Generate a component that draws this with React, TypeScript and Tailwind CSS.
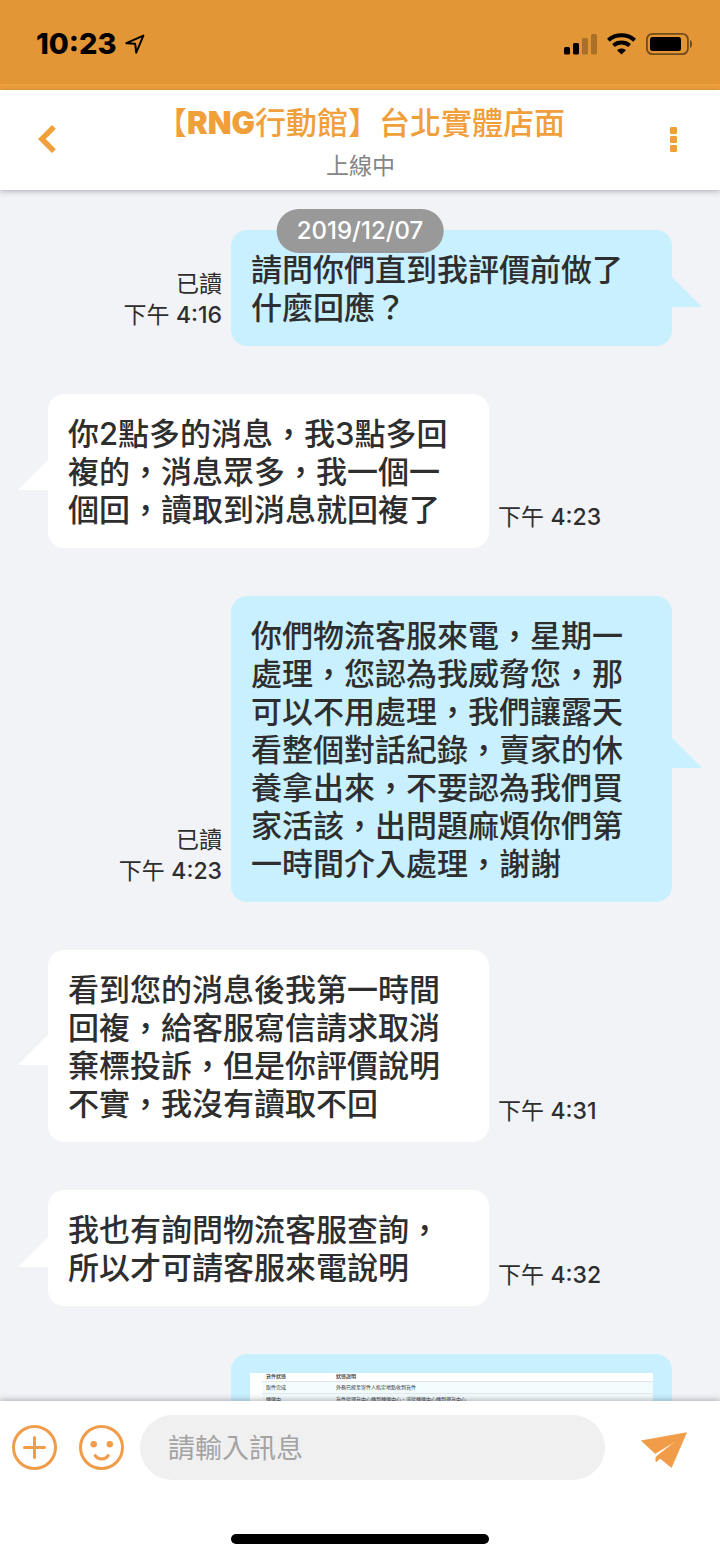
import type { ReactNode } from "react";

type Message = {
  id: number;
  mine: boolean;
  time: string;
  text: string;
};

const messages: Message[] = [
  { id: 1, mine: true, time: "4:16", text: "請問你們直到我評價前做了什麼回應？" },
  {
    id: 2,
    mine: false,
    time: "4:23",
    text: "你2點多的消息，我3點多回複的，消息眾多，我一個一個回，讀取到消息就回複了",
  },
  {
    id: 3,
    mine: true,
    time: "4:23",
    text: "你們物流客服來電，星期一處理，您認為我威脅您，那可以不用處理，我們讓露天看整個對話紀錄，賣家的休養拿出來，不要認為我們買家活該，出問題麻煩你們第一時間介入處理，謝謝",
  },
  {
    id: 4,
    mine: false,
    time: "4:31",
    text: "看到您的消息後我第一時間回複，給客服寫信請求取消棄標投訴，但是你評價說明不實，我沒有讀取不回",
  },
  { id: 5, mine: false, time: "4:32", text: "我也有詢問物流客服查詢，所以才可請客服來電說明" },
];

const parcelStates = [
  ["取件完成", "外務已經至寄件人指定地點收到貨件"],
  ["轉運中", "貨件從理貨中心轉到轉運中心，或從轉運中心轉到理貨中心"],
];

function StatusBar() {
  return (
    <div className="flex h-[90px] shrink-0 items-center justify-between border-b-[6px] border-[#f0a03a] bg-[#e39636] pt-1 pr-[27px] pl-9 text-black">
      <div className="flex items-center gap-2">
        <span className="text-[29px] leading-8 font-extrabold">10:23</span>
        <svg width="20" height="20" viewBox="0 0 20 20" fill="none" stroke="currentColor" strokeWidth="2" strokeLinejoin="round" aria-hidden="true">
          <path d="M1.4 9.2 18.4 1.6 11.2 18.6 10.2 9.8Z" />
        </svg>
      </div>
      <div className="flex items-center gap-[10px]">
        <svg width="33" height="22" viewBox="0 0 33 22" fill="currentColor" aria-hidden="true">
          <rect x="0" y="14" width="6" height="7.5" rx="1.5" />
          <rect x="9" y="10" width="6" height="11.5" rx="1.5" />
          <rect x="18" y="5" width="6" height="16.5" rx="1.5" opacity=".25" />
          <rect x="27" y="1" width="6" height="20.5" rx="1.5" opacity=".25" />
        </svg>
        <svg width="29" height="22" viewBox="0 0 29 22" aria-hidden="true">
          <g fill="none" stroke="currentColor" strokeWidth="4">
            <path d="M1.4 7.2C8.6.6 20.4.6 27.6 7.2" />
            <path d="M6.4 12.6c4.6-4 11.6-4 16.2 0" />
          </g>
          <path d="M14.5 21.6 10 17.2c2.6-2.2 6.4-2.2 9 0Z" fill="currentColor" />
        </svg>
        <svg width="47" height="22" viewBox="0 0 47 22" aria-hidden="true">
          <rect x=".9" y=".9" width="41" height="20.2" rx="5.5" fill="none" stroke="currentColor" strokeWidth="1.8" opacity=".5" />
          <rect x="4" y="4" width="31" height="14" rx="2.5" fill="currentColor" />
          <path d="M44 7c2.8 1 2.8 7 0 8Z" fill="currentColor" opacity=".5" />
        </svg>
      </div>
    </div>
  );
}

function Header() {
  return (
    <header className="z-10 flex h-[100px] shrink-0 items-center justify-between bg-white pr-[22px] pb-[2px] pl-[23px] shadow-[0_1px_6px_rgba(60,60,80,0.4)]">
      <button type="button" aria-label="返回" className="flex size-12 items-center justify-center text-[#f0a03a]">
        <svg width="18" height="28" viewBox="0 0 18 28" fill="currentColor" aria-hidden="true">
          <path d="M0 14 14 0l3.8 3.8L7.8 14l10 10.2L14 28Z" />
        </svg>
      </button>
      <div className="flex flex-col items-center pt-[6px]">
        <h1 className="text-[31px] leading-10 font-medium whitespace-nowrap text-[#f0a03a]">
          【<span className="font-black">RNG</span>行動館】台北實體店面
        </h1>
        <p className="pt-[7px] text-[23px] leading-8 text-[#858585]">上線中</p>
      </div>
      <button type="button" aria-label="更多選項" className="flex size-12 items-center justify-center text-[#f0a03a]">
        <svg width="7" height="25" viewBox="0 0 7 25" fill="currentColor" aria-hidden="true">
          <rect width="7" height="7" rx="1.2" />
          <rect y="9" width="7" height="7" rx="1.2" />
          <rect y="18" width="7" height="7" rx="1.2" />
        </svg>
      </button>
    </header>
  );
}

function Tail({ mine }: { mine: boolean }) {
  return mine ? (
    <div className="mt-2 size-[30px] shrink-0 self-center bg-[#c8f0fe] [clip-path:polygon(0_0,100%_100%,0_100%)]" />
  ) : (
    <div className="mt-2 size-[30px] shrink-0 self-center bg-white [clip-path:polygon(100%_0,100%_100%,0_100%)]" />
  );
}

function Row({ mine, time, children }: { mine: boolean; time?: string; children: ReactNode }) {
  return (
    <li className={mine ? "flex flex-row-reverse items-end" : "flex items-end"}>
      <Tail mine={mine} />
      <div
        className={
          mine
            ? "max-w-[441px] rounded-2xl bg-[#c8f0fe] px-5 pt-[21px] pb-[19px]"
            : "max-w-[441px] rounded-2xl bg-white px-5 pt-[21px] pb-[19px]"
        }
      >
        {children}
      </div>
      {time && (
        <div className="shrink-0 px-[9px] pb-[15px] text-right text-[23px] leading-[31px]">
          {mine && <div>已讀</div>}
          <time>
            下午 <span className="font-medium">{time}</span>
          </time>
        </div>
      )}
    </li>
  );
}

function ParcelTable() {
  return (
    <div className="-mx-px -mt-[2px] min-h-[320px] w-[403px] bg-white pl-3">
      <table className="w-full text-left text-[5px] leading-[7px] text-[#333]">
        <thead>
          <tr className="border-b border-[#e2e6e8]">
            <th className="w-[70px] pb-px pl-1 font-medium">貨件狀態</th>
            <th className="pb-px pl-1 font-medium">狀態說明</th>
          </tr>
        </thead>
        <tbody>
          {parcelStates.map(([state, detail]) => (
            <tr key={state} className="border-b border-[#e2e6e8] bg-[#f3fcfd]">
              <td className="py-[2px] pl-1">{state}</td>
              <td className="py-[2px] pl-1">{detail}</td>
            </tr>
          ))}
        </tbody>
      </table>
    </div>
  );
}

function Composer() {
  return (
    <footer className="z-10 shrink-0 bg-white pt-[14px] pb-[15px] shadow-[0_-1px_6px_rgba(60,60,80,0.4)]">
      <form className="flex items-center pr-[33px] pl-3 text-[#f09c48]" onSubmit={(e) => e.preventDefault()}>
        <button type="button" aria-label="新增附件">
          <svg width="45" height="45" viewBox="0 0 45 45" fill="none" stroke="currentColor" strokeWidth="3" strokeLinecap="round" aria-hidden="true">
            <circle cx="22.5" cy="22.5" r="21" />
            <path d="M12.5 22.5h20M22.5 12.5v20" />
          </svg>
        </button>
        <button type="button" aria-label="表情符號" className="ml-[22px]">
          <svg width="45" height="45" viewBox="0 0 45 45" fill="none" stroke="currentColor" strokeWidth="3" strokeLinecap="round" aria-hidden="true">
            <circle cx="22.5" cy="22.5" r="21" />
            <circle cx="14.7" cy="19.3" r="3.2" fill="currentColor" stroke="none" />
            <circle cx="30.8" cy="19.3" r="3.2" fill="currentColor" stroke="none" />
            <path d="M16.2 30.6c3 4.4 10 4.4 13 0" />
          </svg>
        </button>
        <input
          type="text"
          aria-label="訊息"
          placeholder="請輸入訊息"
          className="ml-4 h-[65px] min-w-0 flex-1 rounded-full bg-[#f0f0f0] px-7 pt-[2px] text-[27px] text-[#333] outline-none placeholder:text-[#a3a3a3]"
        />
        <button type="submit" aria-label="傳送" className="ml-9 pt-1">
          <svg width="46" height="36" viewBox="0 0 46 36" fill="currentColor" stroke="currentColor" strokeWidth="0.8" strokeLinejoin="round" aria-hidden="true">
            <path d="M.6 8.8 45.4.8 30.4 35.4 19.2 26.3 15 29.8 14.9 25.6C15.6 23.6 29 14.6 34.4 9.2L14.2 21.4Z" />
          </svg>
        </button>
      </form>
      <div className="mx-auto mt-[54px] h-[10px] w-[258px] rounded-full bg-black" />
    </footer>
  );
}

export default function App() {
  return (
    <div
      lang="zh-Hant"
      className="flex h-screen flex-col overflow-hidden bg-[#f2f3f7] font-['Inter','Noto_Sans_CJK_TC',sans-serif] text-[#2e2e2e]"
    >
      <StatusBar />
      <Header />
      <main className="relative min-h-0 flex-1 overflow-hidden">
        <div className="absolute top-[19px] left-1/2 z-10 -translate-x-1/2 rounded-full bg-[#999] px-5 text-[24px] leading-[44px] font-medium text-white">
          2019/12/07
        </div>
        <ul className="flex flex-col gap-12 px-[18px] pt-10">
          {messages.map((m) => (
            <Row key={m.id} mine={m.mine} time={m.time}>
              <p className="text-[31px] leading-[38px] font-medium">{m.text}</p>
            </Row>
          ))}
          <Row mine>
            <ParcelTable />
          </Row>
        </ul>
      </main>
      <Composer />
    </div>
  );
}
